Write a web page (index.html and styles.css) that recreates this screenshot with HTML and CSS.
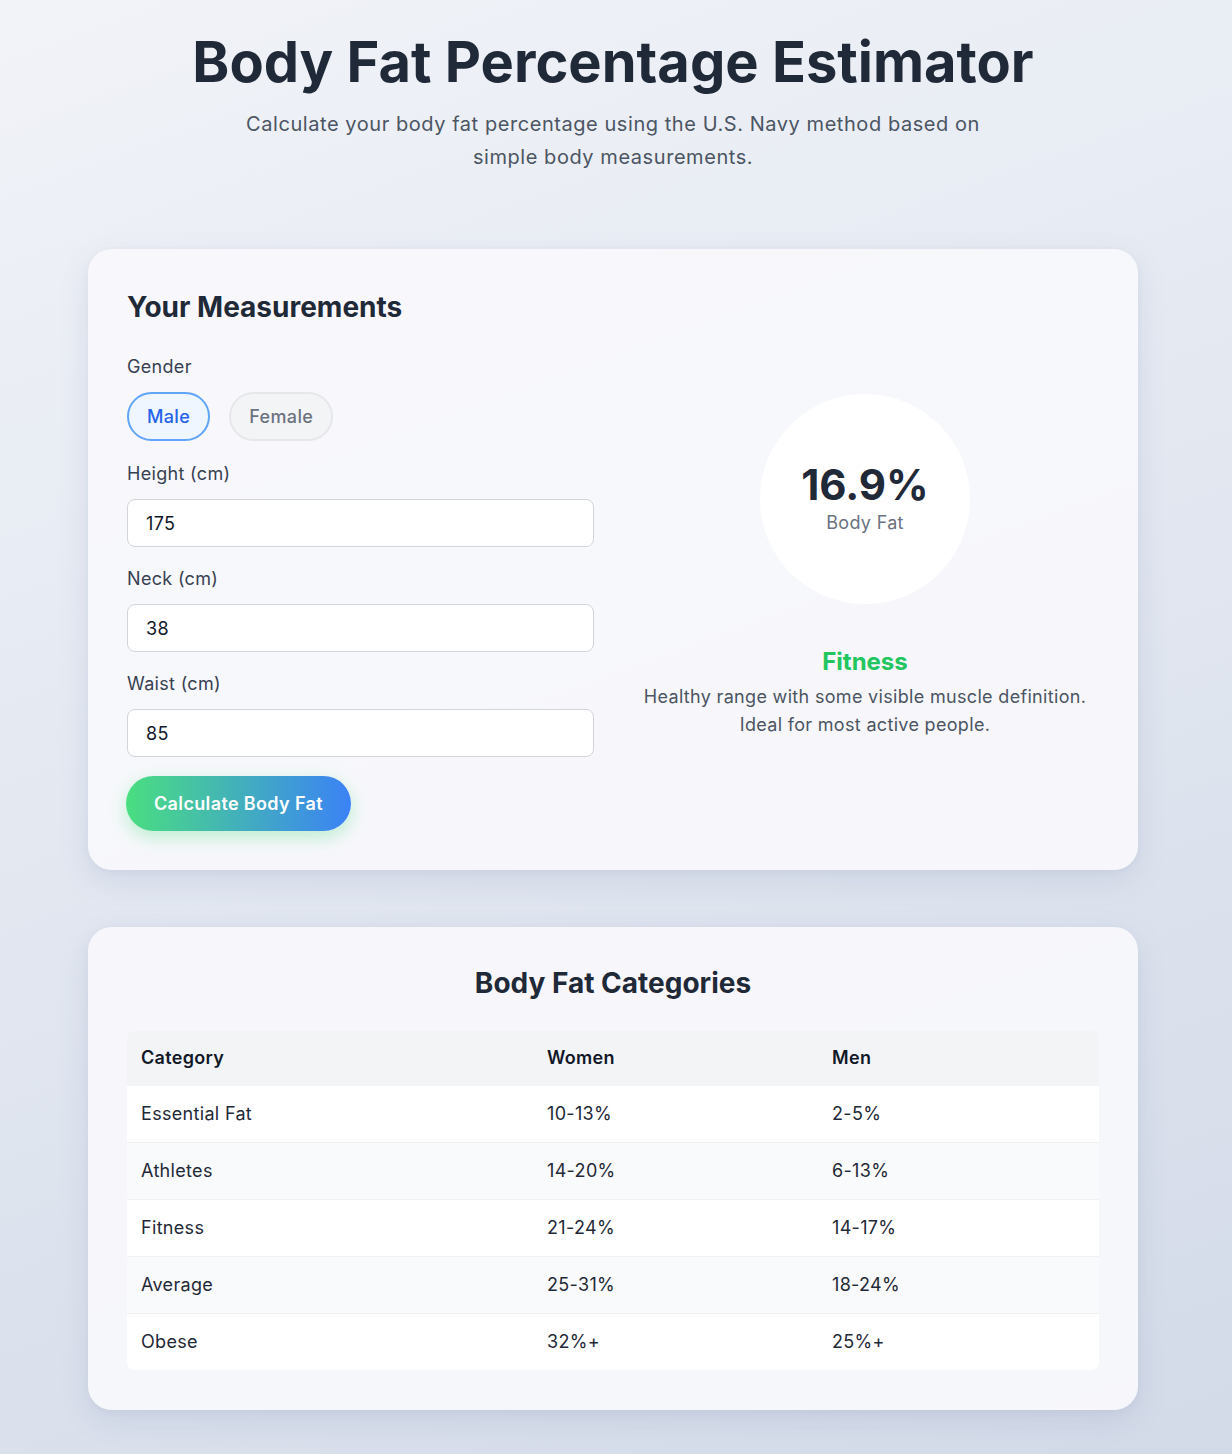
FILE: index.html
```html
<!DOCTYPE html>
<html lang="en">
<head>
<meta charset="utf-8">
<title>Body Fat Percentage Estimator</title>
<link rel="stylesheet" href="styles.css">
</head>
<body>
<div class="page">
  <header class="hero">
    <h1 class="hero-title">Body Fat Percentage Estimator</h1>
    <p class="hero-sub">Calculate your body fat percentage using the U.S. Navy method based on simple body measurements.</p>
  </header>

  <section class="card calc">
    <div class="form-col">
      <h2 class="card-title">Your Measurements</h2>
      <div class="field field-gender">
        <div class="label">Gender</div>
        <div class="toggle">
          <button class="pill pill-active">Male</button>
          <button class="pill">Female</button>
        </div>
      </div>
      <div class="field">
        <label class="label">Height (cm)</label>
        <input class="input" type="text" value="175">
      </div>
      <div class="field">
        <label class="label">Neck (cm)</label>
        <input class="input" type="text" value="38">
      </div>
      <div class="field">
        <label class="label">Waist (cm)</label>
        <input class="input" type="text" value="85">
      </div>
      <button class="calc-btn">Calculate Body Fat</button>
    </div>
    <div class="result-col">
      <div class="gauge">
        <div class="gauge-value">16.9%</div>
        <div class="gauge-label">Body Fat</div>
      </div>
      <div class="cat-name">Fitness</div>
      <p class="cat-desc">Healthy range with some visible muscle definition. Ideal for most active people.</p>
    </div>
  </section>

  <section class="card cats">
    <h2 class="cats-title">Body Fat Categories</h2>
    <table class="table">
      <thead>
        <tr><th class="c1">Category</th><th class="c2">Women</th><th>Men</th></tr>
      </thead>
      <tbody>
        <tr><td>Essential Fat</td><td>10-13%</td><td>2-5%</td></tr>
        <tr><td>Athletes</td><td>14-20%</td><td>6-13%</td></tr>
        <tr><td>Fitness</td><td>21-24%</td><td>14-17%</td></tr>
        <tr><td>Average</td><td>25-31%</td><td>18-24%</td></tr>
        <tr><td>Obese</td><td>32%+</td><td>25%+</td></tr>
      </tbody>
    </table>
  </section>
</div>
</body>
</html>
```

FILE: styles.css
```css
* { box-sizing: border-box; }
html, body { margin: 0; padding: 0; }
body {
  font-family: "Inter", "Noto Sans", sans-serif;
  color: #1f2937;
  letter-spacing: 0.02em;
  background: linear-gradient(160deg, #f1f3f8 0%, #e3e8f1 45%, #d3dae8 100%);
  min-height: 1454px;
}
.page {
  width: 1050px;
  margin: 0 0 0 88px;
  padding: 29px 0 44px;
}
.hero { text-align: center; margin-bottom: 75px; }
.hero-title {
  margin: 0;
  font-size: 56px;
  line-height: 67px;
  font-weight: 700;
  letter-spacing: 0;
  color: #1f2937;
}
.hero-sub {
  margin: 12px auto 0;
  max-width: 760px;
  font-size: 20px;
  line-height: 33px;
  letter-spacing: 0.028em;
  color: #4b5563;
}
.card {
  background: rgba(248, 249, 252, 0.92);
  border-radius: 24px;
  padding: 41px 39px 39px;
  box-shadow: 0 10px 30px rgba(100, 116, 160, 0.14), 0 2px 6px rgba(100, 116, 160, 0.06);
}
.calc {
  display: grid;
  grid-template-columns: 467px 1fr;
  column-gap: 37px;
  margin-bottom: 57px;
}
.card-title {
  margin: 0 0 30px;
  font-size: 28px;
  line-height: 34px;
  font-weight: 700;
  letter-spacing: 0;
  color: #1f2937;
}
.field { margin-bottom: 19px; }
.field-gender { margin-bottom: 20px; }
.label {
  display: block;
  font-size: 18px;
  line-height: 26px;
  color: #374151;
  margin-bottom: 12px;
}
.toggle { display: flex; gap: 19px; }
.pill {
  font-family: inherit;
  font-size: 18px;
  font-weight: 500;
  letter-spacing: 0.02em;
  height: 49px;
  padding: 0 18px;
  border-radius: 999px;
  border: 2px solid #e5e7eb;
  background: #f3f4f6;
  color: #6b7280;
}
.pill-active {
  border-color: #60a5fa;
  background: #eff6ff;
  color: #2563eb;
}
.input {
  display: block;
  width: 100%;
  height: 48px;
  padding: 0 18px;
  font-family: inherit;
  font-size: 18px;
  letter-spacing: 0.02em;
  color: #111827;
  background: #ffffff;
  border: 1px solid #d1d5db;
  border-radius: 8px;
}
.calc-btn {
  display: block;
  font-family: inherit;
  font-size: 18px;
  font-weight: 600;
  letter-spacing: 0.02em;
  color: #ffffff;
  height: 55px;
  padding: 0 28px;
  margin: 1px 0 0 -1px;
  border: none;
  border-radius: 999px;
  background: linear-gradient(90deg, #4ade80 0%, #3b82f6 100%);
  box-shadow: 0 6px 18px rgba(74, 222, 128, 0.35);
}
.result-col {
  display: flex;
  flex-direction: column;
  align-items: center;
  justify-content: center;
  text-align: center;
  padding-top: 11px;
}
.gauge {
  width: 210px;
  height: 210px;
  border-radius: 50%;
  background: #ffffff;
  display: flex;
  flex-direction: column;
  align-items: center;
  justify-content: center;
  margin-bottom: 43px;
}
.gauge-value {
  font-size: 42px;
  line-height: 50px;
  font-weight: 700;
  letter-spacing: 0;
  color: #1f2937;
  margin-top: -2px;
}
.gauge-label {
  font-size: 18px;
  line-height: 26px;
  color: #6b7280;
}
.cat-name {
  font-size: 24px;
  line-height: 30px;
  font-weight: 700;
  letter-spacing: 0;
  color: #22c55e;
  margin-bottom: 6px;
}
.cat-desc {
  margin: 0;
  font-size: 18px;
  line-height: 28px;
  color: #4b5563;
}
.cats { padding-bottom: 40px; padding-top: 39px; }
.cats-title {
  margin: 0 0 31px;
  text-align: center;
  font-size: 28px;
  line-height: 34px;
  font-weight: 700;
  letter-spacing: 0;
  color: #1f2937;
}
.table {
  width: 100%;
  border-collapse: collapse;
  border-radius: 8px;
  overflow: hidden;
  font-size: 18px;
}
.table th, .table td {
  text-align: left;
  padding: 15px 14px;
  line-height: 26px;
}
.table th {
  background: #f3f4f6;
  font-weight: 600;
  color: #111827;
  padding: 14px 14px 15px;
}
.table .c1 { width: 406px; }
.table .c2 { width: 285px; }
.table td { color: #1f2937; border-bottom: 1px solid #eef0f3; }
.table tbody tr { background: #ffffff; }
.table tbody tr:nth-child(even) { background: #f9fafb; }
.table tbody tr:last-child td { border-bottom: none; }
```
